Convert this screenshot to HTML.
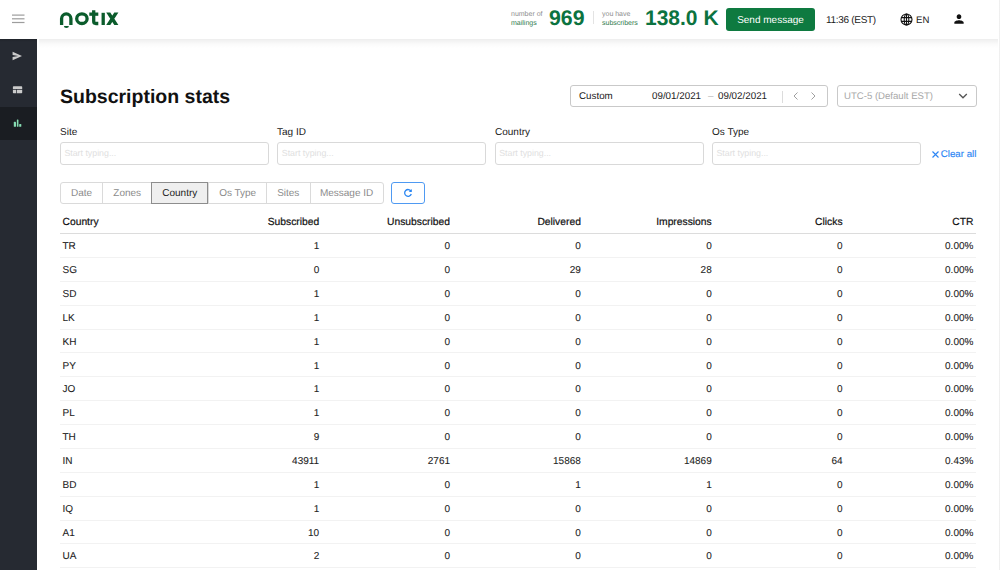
<!DOCTYPE html>
<html><head><meta charset="utf-8">
<style>
*{box-sizing:border-box;margin:0;padding:0}
html,body{width:1000px;height:570px;overflow:hidden;background:#fff;font-family:"Liberation Sans",sans-serif;color:#1a1a1a;text-rendering:geometricPrecision;-webkit-font-smoothing:antialiased}
.abs{position:absolute}
#hdr{position:absolute;left:0;top:0;width:1000px;height:39px;background:#fff;z-index:5}
#side{position:absolute;left:0;top:39px;width:37px;height:531px;background:#262a32}
#side .act{position:absolute;left:0;top:67.7px;width:37px;height:33px;background:#1a1d22}
#sb{position:absolute;left:998.6px;top:0;width:1.4px;height:570px;background:linear-gradient(90deg,#f4f4f4,#ebebeb);z-index:10}
.t{position:absolute;white-space:nowrap;line-height:1}
.inp{position:absolute;top:142.2px;height:22.5px;width:209.2px;border:1px solid #d9d9d9;border-radius:3px;font-size:8.8px;color:#e0e0e0;padding:6.3px 0 0 3.6px;line-height:1;white-space:nowrap}
.lbl{position:absolute;top:128.4px;font-size:10px;line-height:1;color:#1a1a1a}
#grp{position:absolute;left:60px;top:182.3px;height:21.7px;width:323.5px;border:1px solid #dadada;border-radius:3px;display:flex}
#grp div{height:100%;border-right:1px solid #dadada;font-size:10px;color:#8b8b8b;text-align:center;line-height:21px;white-space:nowrap}
#grp div:last-child{border-right:none}
#act{position:absolute;left:151.2px;top:182.3px;width:57.2px;height:21.7px;border:1px solid #8d8d8d;background:#efefef;font-size:10px;color:#222;text-align:center;line-height:21px}
#tbl{position:absolute;left:60px;top:210.34px;width:916px;font-size:10px;color:#222}
.tr span{position:relative;top:1.6px;-webkit-text-stroke:0.08px #222}
.tr{display:flex;height:23.86px;border-bottom:1px solid #f2f2f2;align-items:center}
.tr span{flex:0 0 130.857px;text-align:right;padding-right:2.5px;white-space:nowrap;line-height:1}
.tr span:first-child{text-align:left;padding-left:2.5px;padding-right:0}
.tr.th{border-bottom:1px solid #dcdcdc}
.tr.th span{font-size:10.3px;color:#111;-webkit-text-stroke:0.2px #111;position:relative;top:1.7px}
</style></head><body>
<div id="hdr">
  <svg class="abs" style="left:12px;top:14px" width="13" height="10" viewBox="0 0 13 10"><rect x="0" y="0.5" width="12.5" height="1.2" fill="#9d9d9d"/><rect x="0" y="4.2" width="12.5" height="1.2" fill="#9d9d9d"/><rect x="0" y="7.9" width="12.5" height="1.2" fill="#9d9d9d"/></svg>
  <svg class="abs" style="left:56px;top:6px" width="66" height="26" viewBox="56 6 66 26">
    <g fill="none" stroke="#0b5c2c" stroke-width="3.3">
      <path d="M61.6 25.1 V18.6 A4.65 4.65 0 0 1 70.9 18.6 V25.1"/>
      <ellipse cx="81.9" cy="18.7" rx="5.2" ry="4.8"/>
      <path d="M93.7 10.3 V21.3 A2.2 2.2 0 0 0 95.9 23.5 H98.3"/>
      <path d="M103.2 12.8 V25"/>
    </g>
    <rect x="89.3" y="12.5" width="9" height="3.3" fill="#0b5c2c"/>
    <path d="M106.2 12.6 H110.3 L118.4 25.1 H114.3 Z M114.3 12.6 H118.4 L110.3 25.1 H106.2 Z" fill="#0b5c2c"/>
    <path d="M63.9 26.1 H68.9 A2.5 2 0 0 1 63.9 26.1 Z" fill="#0b5c2c"/>
  </svg>
  <div class="t" style="left:511px;top:11.3px;font-size:7px;color:#8d8d8d">number of</div>
  <div class="t" style="left:511px;top:19.5px;font-size:7px;color:#2f7a4d">mailings</div>
  <div class="t" style="left:549px;top:7.5px;font-size:21.3px;font-weight:bold;color:#0c7340">969</div>
  <div class="abs" style="left:593px;top:10.6px;width:1px;height:13.4px;background:#e3e3e3"></div>
  <div class="t" style="left:602px;top:11.3px;font-size:7px;color:#8d8d8d">you have</div>
  <div class="t" style="left:602px;top:19.5px;font-size:7px;color:#2f7a4d">subscribers</div>
  <div class="t" style="left:645px;top:7.6px;font-size:21px;font-weight:bold;color:#0c7340">138.0 K</div>
  <div class="abs" style="left:726px;top:8px;width:89px;height:23px;background:#0e7a40;border-radius:3px;color:#fff;font-size:10px;text-align:center;padding-top:8px;line-height:1">Send message</div>
  <div class="t" style="left:826px;top:16px;font-size:10px;letter-spacing:-0.3px;color:#1a1a1a">11:36 (EST)</div>
  <svg class="abs" style="left:899.5px;top:13.2px" width="13" height="13" viewBox="0 0 13 13"><g fill="none" stroke="#111" stroke-width="1.1"><circle cx="6.5" cy="6.5" r="5.5"/><ellipse cx="6.5" cy="6.5" rx="2.3" ry="5.5"/><path d="M1.2 4.6 H11.8 M1.2 8.4 H11.8 M6.5 1 V12"/></g></svg>
  <div class="t" style="left:916px;top:15.5px;font-size:9.6px;color:#1a1a1a">EN</div>
  <svg class="abs" style="left:951.6px;top:12px" width="14" height="14" viewBox="0 0 24 24"><path fill="#111" d="M12 12c2.21 0 4-1.79 4-4s-1.79-4-4-4-4 1.79-4 4 1.79 4 4 4zm0 2c-2.67 0-8 1.34-8 4v2h16v-2c0-2.66-5.33-4-8-4z"/></svg>
</div>
<div id="side">
  <div class="act"></div>
</div>
<svg class="abs" style="left:0;top:0" width="37" height="140" viewBox="0 0 37 140">
  <path d="M12.6 51.8 L22 56 L12.6 60.2 L12.6 57.1 L18.2 56 L12.6 54.9 Z" fill="#cbcbcb"/>
  <path d="M13.6 86.3 H21.5 Q22.2 86.3 22.2 87 V89 H12.9 V87 Q12.9 86.3 13.6 86.3 Z" fill="#cbcbcb"/>
  <path d="M12.9 89.8 H16.2 V93.2 H13.6 Q12.9 93.2 12.9 92.5 Z" fill="#cbcbcb"/>
  <path d="M16.9 89.8 H22.2 V92.5 Q22.2 93.2 21.5 93.2 H16.9 Z" fill="#cbcbcb"/>
  <rect x="13.8" y="121.8" width="2.2" height="5" rx="0.6" fill="#86dcb2"/>
  <rect x="16.85" y="119.5" width="1.6" height="7.3" rx="0.6" fill="#86dcb2"/>
  <rect x="19.2" y="123.9" width="2.1" height="2.9" rx="0.6" fill="#86dcb2"/>
</svg>
<div id="sb"></div>
<div class="abs" style="left:39px;top:39px;width:959px;height:9px;background:linear-gradient(rgba(0,0,0,.065),rgba(0,0,0,.02) 55%,rgba(0,0,0,0))"></div>
<div class="abs" style="left:0;top:39px;width:37px;height:3px;background:linear-gradient(rgba(0,0,0,.15),rgba(0,0,0,0))"></div>

<div class="t" style="left:60px;top:87.7px;font-size:19.5px;font-weight:bold;color:#111">Subscription stats</div>

<div class="abs" style="left:570px;top:85px;width:258px;height:22.2px;border:1px solid #c9c9c9;border-radius:3px"></div>
<div class="t" style="left:579px;top:92px;font-size:9.8px">Custom</div>
<div class="t" style="left:652px;top:92px;font-size:9.8px">09/01/2021</div>
<div class="t" style="left:708px;top:92px;font-size:9.8px;color:#bbb">–</div>
<div class="t" style="left:718px;top:92px;font-size:9.8px">09/02/2021</div>
<div class="abs" style="left:782px;top:91px;width:1px;height:12px;background:#dcdcdc"></div>
<svg class="abs" style="left:792px;top:91px" width="8" height="10" viewBox="0 0 8 10"><path d="M5.5 1.5 L2 5 L5.5 8.5" fill="none" stroke="#a0a0a0" stroke-width="1"/></svg>
<svg class="abs" style="left:809px;top:91px" width="8" height="10" viewBox="0 0 8 10"><path d="M2.5 1.5 L6 5 L2.5 8.5" fill="none" stroke="#a0a0a0" stroke-width="1"/></svg>

<div class="abs" style="left:837px;top:85px;width:140px;height:22.2px;border:1px solid #c9c9c9;border-radius:3px"></div>
<div class="t" style="left:844px;top:92px;font-size:9.6px;color:#a8a8a8">UTC-5 (Default EST)</div>
<svg class="abs" style="left:958px;top:92px" width="10" height="8" viewBox="0 0 10 8"><path d="M1.2 2 L5 5.8 L8.8 2" fill="none" stroke="#555" stroke-width="1.3"/></svg>

<div class="lbl" style="left:60px">Site</div>
<div class="lbl" style="left:277px">Tag ID</div>
<div class="lbl" style="left:495px">Country</div>
<div class="lbl" style="left:712px">Os Type</div>
<div class="inp" style="left:59.8px">Start typing...</div>
<div class="inp" style="left:277.2px">Start typing...</div>
<div class="inp" style="left:494.6px">Start typing...</div>
<div class="inp" style="left:711.9px">Start typing...</div>
<svg class="abs" style="left:932px;top:150.5px" width="7" height="7" viewBox="0 0 7 7"><path d="M0.5 0.5 L6.5 6.5 M6.5 0.5 L0.5 6.5" stroke="#2c86f4" stroke-width="1.15"/></svg><div class="t" style="left:940.8px;top:150px;font-size:9.7px;color:#2c86f4;-webkit-text-stroke:0.15px #2c86f4">Clear all</div>

<div id="grp"><div style="width:42.2px">Date</div><div style="width:49.1px">Zones</div><div style="width:57.2px">Country</div><div style="width:57.4px">Os Type</div><div style="width:43.8px">Sites</div><div style="flex:1">Message ID</div></div>
<div id="act">Country</div>
<div class="abs" style="left:391.3px;top:182.2px;width:33.3px;height:21.8px;border:1px solid #4f9af2;border-radius:3px"></div>
<svg class="abs" style="left:403px;top:188px" width="10" height="10" viewBox="0 0 10 10"><path d="M8 3.2 A3.4 3.4 0 1 0 8.3 6" fill="none" stroke="#2a86f2" stroke-width="1.3"/><path d="M8.8 1 V4 H5.8 Z" fill="#2a86f2"/></svg>

<div id="tbl">
<div class="tr th"><span>Country</span><span>Subscribed</span><span>Unsubscribed</span><span>Delivered</span><span>Impressions</span><span>Clicks</span><span>CTR</span></div>
<div class="tr"><span>TR</span><span>1</span><span>0</span><span>0</span><span>0</span><span>0</span><span>0.00%</span></div>
<div class="tr"><span>SG</span><span>0</span><span>0</span><span>29</span><span>28</span><span>0</span><span>0.00%</span></div>
<div class="tr"><span>SD</span><span>1</span><span>0</span><span>0</span><span>0</span><span>0</span><span>0.00%</span></div>
<div class="tr"><span>LK</span><span>1</span><span>0</span><span>0</span><span>0</span><span>0</span><span>0.00%</span></div>
<div class="tr"><span>KH</span><span>1</span><span>0</span><span>0</span><span>0</span><span>0</span><span>0.00%</span></div>
<div class="tr"><span>PY</span><span>1</span><span>0</span><span>0</span><span>0</span><span>0</span><span>0.00%</span></div>
<div class="tr"><span>JO</span><span>1</span><span>0</span><span>0</span><span>0</span><span>0</span><span>0.00%</span></div>
<div class="tr"><span>PL</span><span>1</span><span>0</span><span>0</span><span>0</span><span>0</span><span>0.00%</span></div>
<div class="tr"><span>TH</span><span>9</span><span>0</span><span>0</span><span>0</span><span>0</span><span>0.00%</span></div>
<div class="tr"><span>IN</span><span>43911</span><span>2761</span><span>15868</span><span>14869</span><span>64</span><span>0.43%</span></div>
<div class="tr"><span>BD</span><span>1</span><span>0</span><span>1</span><span>1</span><span>0</span><span>0.00%</span></div>
<div class="tr"><span>IQ</span><span>1</span><span>0</span><span>0</span><span>0</span><span>0</span><span>0.00%</span></div>
<div class="tr"><span>A1</span><span>10</span><span>0</span><span>0</span><span>0</span><span>0</span><span>0.00%</span></div>
<div class="tr"><span>UA</span><span>2</span><span>0</span><span>0</span><span>0</span><span>0</span><span>0.00%</span></div>
</div>
</body></html>
